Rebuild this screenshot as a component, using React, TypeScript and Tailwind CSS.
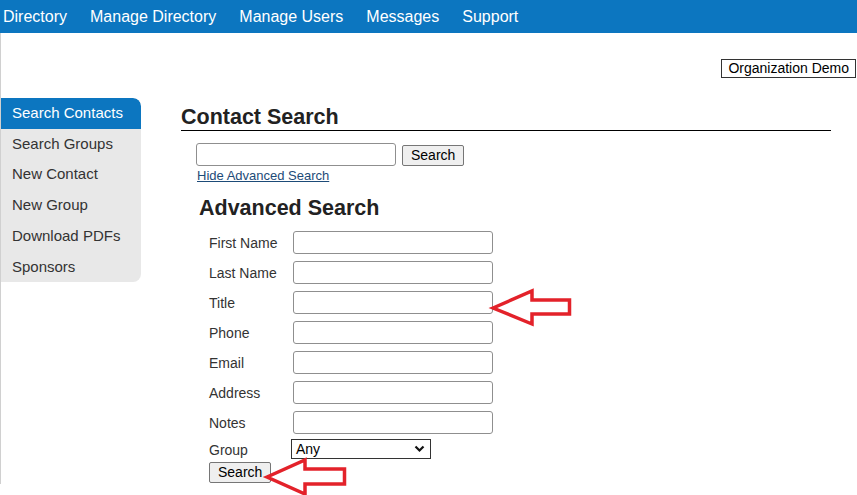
import React from "react";

const navItems = ["Directory", "Manage Directory", "Manage Users", "Messages", "Support"];
const sideItems = ["Search Contacts", "Search Groups", "New Contact", "New Group", "Download PDFs", "Sponsors"];
const fields = ["First Name", "Last Name", "Title", "Phone", "Email", "Address", "Notes"];

const inputCls = "h-[23px] w-[200px] rounded-[3px] border border-[#8f8f8f] bg-white";
const btnCls =
	"h-[21px] rounded-[2px] border border-[#767676] bg-[#efefef] px-[8px] text-[14px] leading-[17px] text-black";

const Arrows: React.FC = () => (
	<svg className="pointer-events-none absolute left-0 top-0" width="857" height="495" viewBox="0 0 857 495">
		<polygon
			points="493,308 532,291 532,300 569.5,300 569.5,314 532,314 532,324"
			fill="none"
			stroke="#e3222a"
			strokeWidth="3.5"
			strokeLinejoin="miter"
		/>
		<polygon
			points="267,477 305,460 305,469 344.5,469 344.5,484 305,484 305,494"
			fill="none"
			stroke="#e3222a"
			strokeWidth="3.5"
			strokeLinejoin="miter"
		/>
	</svg>
);

const App: React.FC = () => {
	return (
		<div className="relative h-[495px] w-[857px] overflow-hidden bg-white font-['Liberation_Sans',Arial,sans-serif] text-[#333]">
			<nav className="flex h-[33px] items-center gap-[23px] bg-[#0c76c0] pl-[3px] text-[16px] text-white">
				{navItems.map((n) => (
					<span key={n}>{n}</span>
				))}
			</nav>

			<div className="border-l border-[#d0d0d0]">
				<div className="flex justify-end pr-[1px] pt-[26px]">
					<div className="h-[19px] border border-[#333] px-[6px] text-[14px] leading-[17px] text-black">
						Organization Demo
					</div>
				</div>

				<div className="mt-[20px] flex">
					<aside className="h-[184px] w-[140px] self-start overflow-hidden rounded-r-[8px] bg-[#e8e8e8]">
						{sideItems.map((s, i) => (
							<div
								key={s}
								className={`flex h-[30.7px] items-center pl-[11px] text-[15px] ${
									i === 0 ? "rounded-tr-[8px] bg-[#0c76c0] text-white" : "text-[#333]"
								}`}
							>
								{s}
							</div>
						))}
					</aside>

					<main className="ml-[40px] w-[650px]">
						<h1 className="h-[33px] border-b border-black pt-[7px] text-[21.5px] font-bold leading-[24px] text-[#222]">
							Contact Search
						</h1>

						<div className="ml-[15px] mt-[12px] flex items-end gap-[6px]">
							<input className={inputCls} />
							<button className={btnCls}>Search</button>
						</div>
						<a className="ml-[16px] mt-[2px] block text-[13px] leading-[15px] text-[#1d4b78] underline">
							Hide Advanced Search
						</a>

						<h2 className="ml-[18px] mt-[12.5px] text-[21.5px] font-bold leading-[24px] text-[#222]">
							Advanced Search
						</h2>

						<div className="ml-[28px] mt-[11.5px] flex flex-col gap-[7px]">
							{fields.map((f) => (
								<div key={f} className="flex items-center">
									<label className="w-[84px] pt-[1px] text-[14px] leading-[16px]">{f}</label>
									<input className={inputCls} />
								</div>
							))}
							<div className="-mt-[2px] flex items-center">
								<label className="w-[82px] pt-[2px] text-[14px] leading-[16px]">Group</label>
								<div className="relative h-[20px] w-[140px] border border-[#333] bg-white">
									<span className="absolute left-[4px] top-[1px] text-[14px] leading-[16px] text-black">Any</span>
									<svg
										className="absolute right-[5px] top-[5px]"
										width="11"
										height="8"
										viewBox="0 0 11 8"
									>
										<path d="M1.5 1.5 L5.5 5.5 L9.5 1.5" fill="none" stroke="#111" strokeWidth="2.2" />
									</svg>
								</div>
							</div>
							<div className="-mt-[6px]">
								<button className={btnCls}>Search</button>
							</div>
						</div>
					</main>
				</div>
			</div>

			<Arrows />
		</div>
	);
};

export default App;
